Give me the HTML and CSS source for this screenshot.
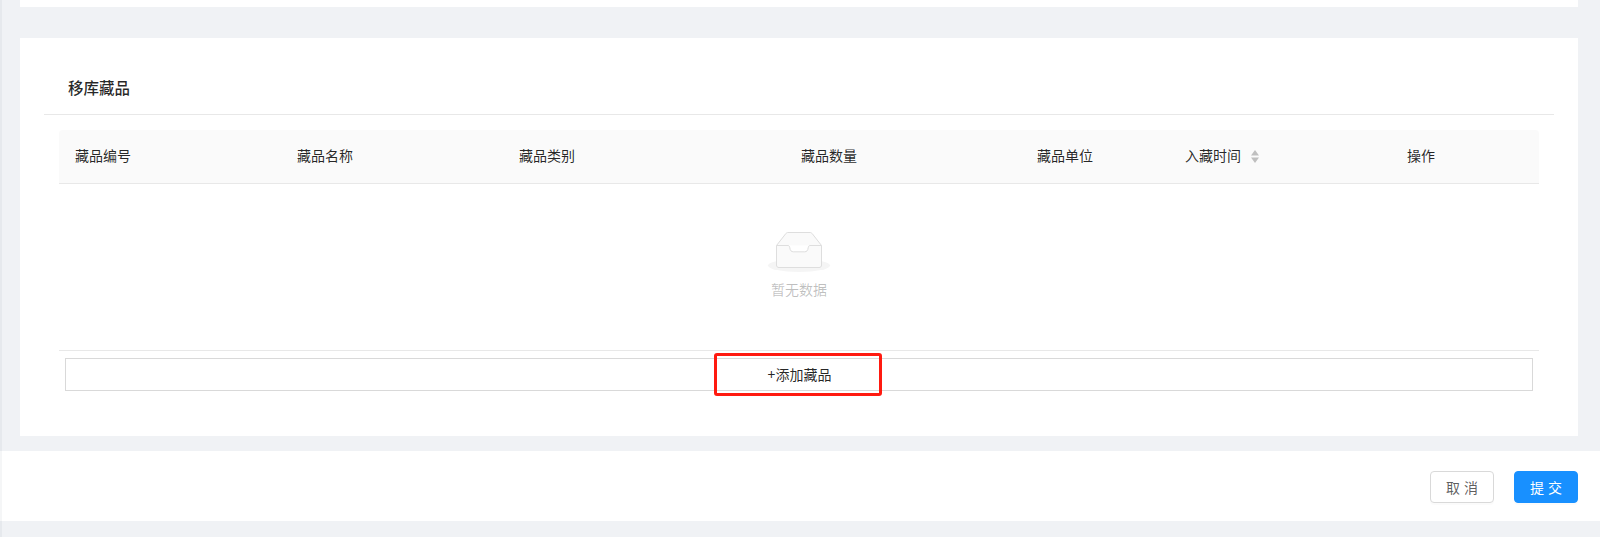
FILE: index.html
```html
<!DOCTYPE html>
<html lang="zh-CN">
<head>
<meta charset="utf-8">
<title>移库藏品</title>
<link rel="stylesheet" href="styles.css">
</head>
<body>
<div class="edge"></div>
<main class="content">
  <div class="card-stub"></div>
  <section class="card">
    <h2 class="card-title">移库藏品</h2>
    <div class="card-body">
      <div class="table">
        <div class="thead">
          <div class="th">藏品编号</div>
          <div class="th">藏品名称</div>
          <div class="th">藏品类别</div>
          <div class="th">藏品数量</div>
          <div class="th">藏品单位</div>
          <div class="th th-sort">入藏时间
            <svg class="sorter" viewBox="0 0 8 13" width="8" height="13" aria-hidden="true"><path d="M4 0 L8 5.5 H0 Z M4 13 L0 7.5 H8 Z"/></svg>
          </div>
          <div class="th">操作</div>
        </div>
        <div class="empty">
          <svg class="empty-icon" viewBox="0 0 64 41" width="64" height="41" aria-hidden="true">
            <ellipse cx="32" cy="33.5" rx="31" ry="6.5" fill="#f5f5f5"/>
            <path d="M9.5 13.5 L18.5 2 C19.2 1 20 .5 21 .5 H43 C44 .5 44.8 1 45.5 2 L54.5 13.5 V33 C54.5 34.7 53.7 35.5 52 35.5 H12 C10.3 35.5 9.5 34.7 9.5 33 Z" fill="#fafafa" stroke="#dedede"/>
            <path d="M9.5 13.5 H21 C22.2 13.5 22.6 14.5 22.8 15.8 C23.2 18.6 24.2 19.8 26.5 19.8 H37.5 C39.8 19.8 40.8 18.6 41.2 15.8 C41.4 14.5 41.8 13.5 43 13.5 H54.5" fill="#fff" stroke="#dedede"/>
          </svg>
          <p class="empty-text">暂无数据</p>
        </div>
      </div>
      <button class="add-btn" type="button">+添加藏品</button>
      <div class="highlight"></div>
    </div>
  </section>
</main>
<footer class="footer">
  <button class="btn" type="button">取 消</button>
  <button class="btn btn-primary" type="button">提 交</button>
</footer>
</body>
</html>
```
FILE: styles.css
```css
* { box-sizing: border-box; }
html, body { margin: 0; height: 537px; overflow: hidden; }
body {
  background: #f0f2f5;
  font-family: "Noto Sans CJK SC", "Liberation Sans", sans-serif;
  font-size: 14px;
  color: rgba(0, 0, 0, 0.85);
  position: relative;
}
.edge {
  position: absolute;
  left: 0;
  top: 0;
  width: 2px;
  height: 100%;
  background: rgba(0, 21, 41, 0.04);
}
.content { padding: 0 22px 0 20px; }
.card-stub { height: 7px; background: #fff; margin-bottom: 31px; }
.card { height: 398px; background: #fff; padding: 0 24px; }
.card-title {
  margin: 0;
  height: 77px;
  padding: 39px 0 0 24px;
  font-size: 15.5px;
  line-height: 20px;
  font-weight: 500;
  color: rgba(0, 0, 0, 0.85);
  border-bottom: 1px solid #e8e8e8;
}
.card-body { position: relative; padding: 15px 15px 0; }
.table { height: 221px; border-bottom: 1px solid #e8e8e8; }
.thead {
  display: grid;
  grid-template-columns: 222px 222px 282px 236px 148px 222px 148px;
  height: 54px;
  background: #fafafa;
  border-bottom: 1px solid #e8e8e8;
  border-radius: 4px 4px 0 0;
}
.th {
  padding: 0 16px 4px;
  display: flex;
  align-items: center;
  line-height: 20px;
  color: rgba(0, 0, 0, 0.85);
}
.th-sort { gap: 10px; }
.sorter { fill: #bfbfbf; flex: none; margin-top: 4px; }
.empty {
  display: flex;
  flex-direction: column;
  align-items: center;
  padding-top: 48px;
}
.empty-icon { display: block; }
.empty-text {
  margin: 5px 0 0;
  line-height: 22px;
  color: rgba(0, 0, 0, 0.25);
}
.add-btn {
  display: block;
  width: 1468px;
  height: 33px;
  margin: 7px 0 0 6px;
  padding: 0 0 2px 1px;
  background: #fff;
  border: 1px solid #d9d9d9;
  font: inherit;
  line-height: 20px;
  color: rgba(0, 0, 0, 0.85);
}
.highlight {
  position: absolute;
  left: 670px;
  top: 238px;
  width: 168px;
  height: 43px;
  border: 3px solid #ff1a10;
  border-radius: 3px;
  pointer-events: none;
}
.footer {
  margin-top: 15px;
  height: 70px;
  background: #fff;
  display: flex;
  justify-content: flex-end;
  align-items: flex-start;
  gap: 20px;
  padding: 20px 22px 0 0;
}
.btn {
  width: 64px;
  height: 32px;
  padding: 0;
  background: #fff;
  border: 1px solid #d9d9d9;
  border-radius: 4px;
  font: inherit;
  word-spacing: 1px;
  color: rgba(0, 0, 0, 0.65);
  box-shadow: 0 2px 0 rgba(0, 0, 0, 0.015);
}
.btn-primary {
  background: #1890ff;
  border-color: #1890ff;
  color: #fff;
}
```
